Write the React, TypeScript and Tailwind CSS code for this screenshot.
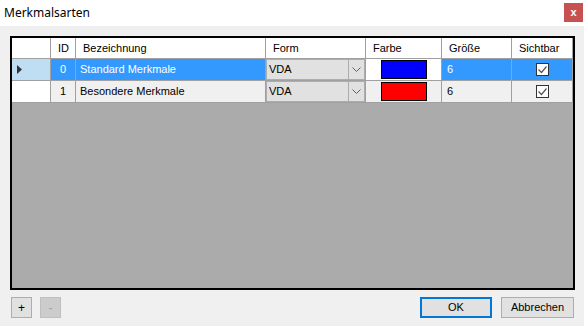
import React from "react";

const COLS = [
  { key: "hdr", w: "w-[39px]" },
  { key: "id", w: "w-[25px]" },
  { key: "name", w: "w-[190px]" },
  { key: "form", w: "w-[100px]" },
  { key: "color", w: "w-[76px]" },
  { key: "size", w: "w-[70px]" },
  { key: "visible", w: "w-[61px]" },
];

interface Row {
  id: number;
  name: string;
  form: string;
  color: string;
  size: number;
  visible: boolean;
}

const ROWS: Row[] = [
  { id: 0, name: "Standard Merkmale", form: "VDA", color: "#0000ff", size: 6, visible: true },
  { id: 1, name: "Besondere Merkmale", form: "VDA", color: "#ff0000", size: 6, visible: true },
];

function Chevron() {
  return (
    <svg width="9" height="5" viewBox="0 0 9 5" className="block">
      <path d="M0.5 0.5 L4.5 4.5 L8.5 0.5" fill="none" stroke="#606060" strokeWidth="1" />
    </svg>
  );
}

function Check() {
  return (
    <div className="flex h-[13px] w-[13px] items-center justify-center border border-[#333] bg-white">
      <svg width="11" height="11" viewBox="0 0 11 11">
        <path d="M1.5 5.5 L4.5 8.5 L9.5 2.5" fill="none" stroke="#555" strokeWidth="1.2" />
      </svg>
    </div>
  );
}

function GridRow({ row, selected }: { row: Row; selected: boolean }) {
  const cell = "h-full shrink-0 border-r border-b border-[#a0a0a0] flex items-center";
  const bg = selected ? "bg-[#3399ff] text-white" : "bg-[#f0f0f0] text-black";
  return (
    <div className="flex h-[22px]">
      <div className={`${cell} ${COLS[0].w} ${selected ? "bg-[#bfddf3]" : "bg-white"} pl-[5px]`}>
        {selected && (
          <svg width="6" height="9" viewBox="0 0 6 9">
            <path d="M0 0 L5 4.5 L0 9 Z" fill="#333" />
          </svg>
        )}
      </div>
      <div className={`${cell} ${COLS[1].w} ${bg} justify-center`}>{row.id}</div>
      <div className={`${cell} ${COLS[2].w} ${bg} pl-[4px]`}>{row.name}</div>
      <div className={`${cell} ${COLS[3].w} ${bg}`}>
        <div className="flex h-full w-full items-center border border-[#adadad] bg-[#e1e1e1] text-black">
          <span className="flex-1 pl-[2px]">{row.form}</span>
          <div className="flex h-full w-[16px] items-center justify-center border-l border-[#adadad]">
            <Chevron />
          </div>
        </div>
      </div>
      <div className={`${cell} ${COLS[4].w} ${selected ? "bg-white" : "bg-[#f0f0f0]"} justify-center`}>
        <div className="h-[19px] w-[46px] border border-black" style={{ backgroundColor: row.color }} />
      </div>
      <div className={`${cell} ${COLS[5].w} ${bg} pl-[5px]`}>{row.size}</div>
      <div className={`${cell} ${COLS[6].w} ${bg} justify-center`}>{row.visible && <Check />}</div>
    </div>
  );
}

export default function App() {
  const headers = ["", "ID", "Bezeichnung", "Form", "Farbe", "Größe", "Sichtbar"];
  return (
    <div
      className="flex h-[326px] w-[584px] flex-col bg-[#f0f0f0] text-[11px] text-black"
      style={{ fontFamily: '"Liberation Sans", Arial, sans-serif' }}
    >
      <div className="flex h-[26px] shrink-0 items-start justify-between bg-white pl-[4px]">
        <span className="mt-[4px] text-[12px] text-black" style={{ fontFamily: '"Noto Sans", sans-serif' }}>
          Merkmalsarten
        </span>
        <div className="mr-[1px] mt-[3px] flex h-[19px] w-[19px] items-center justify-center bg-[#c75050] text-[11px] font-bold leading-none text-white">
          x
        </div>
      </div>

      <div className="ml-[10px] mt-[10px] h-[254px] w-[565px] overflow-hidden border-2 border-black bg-[#ababab]">
        <div className="flex h-[21px] bg-white">
          {COLS.map((c, i) => (
            <div
              key={c.key}
              className={`flex h-full shrink-0 items-center border-r border-b border-[#a0a0a0] pl-[7px] ${c.w}`}
            >
              {headers[i]}
            </div>
          ))}
        </div>
        {ROWS.map((r, i) => (
          <GridRow key={r.id} row={r} selected={i === 0} />
        ))}
      </div>

      <div className="mt-[7px] flex h-[21px] items-stretch pl-[11px] pr-[10px]">
        <button className="w-[21px] border border-[#adadad] bg-[#e1e1e1] text-[12px] leading-none">+</button>
        <button className="ml-[8px] w-[21px] border border-[#bfbfbf] bg-[#cccccc] text-[12px] leading-none text-[#a0a0a0]">
          -
        </button>
        <div className="flex-1" />
        <button className="w-[72px] border-2 border-[#0078d7] bg-[#e1e1e1]">OK</button>
        <button className="ml-[9px] w-[73px] border border-[#adadad] bg-[#e1e1e1]">Abbrechen</button>
      </div>
    </div>
  );
}
